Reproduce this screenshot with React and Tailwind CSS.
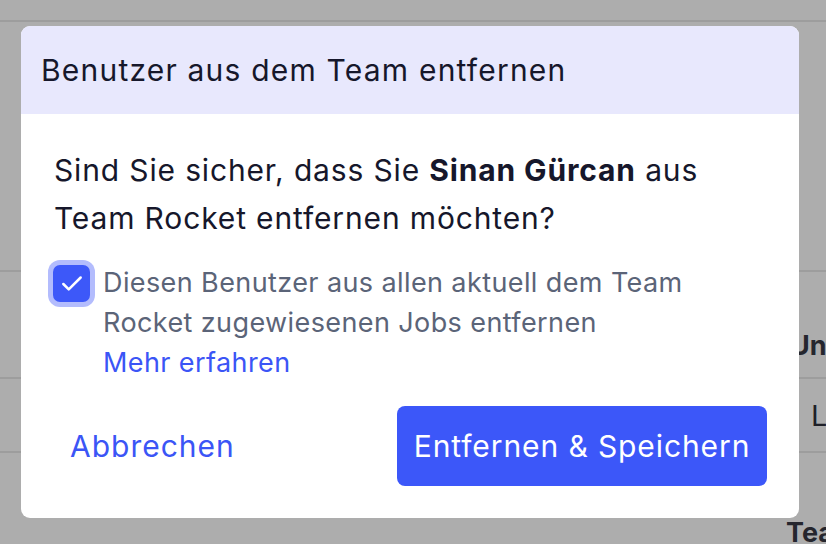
import { Check } from 'lucide-react';

// Background table that sits behind the dialog
function BackgroundTable() {
  return (
    <div className="flex flex-col h-full">
      <div className="h-[22px] border-b-2 border-[#9d9d9d]" />
      <div className="h-[250px] border-b-2 border-[#9d9d9d]" />
      <div className="h-[107px] border-b-2 border-[#9d9d9d] flex items-end pb-[18px] pl-[790px]">
        <span className="text-[27px] font-bold text-[#25262e] leading-none whitespace-nowrap">Unt</span>
      </div>
      <div className="h-[74px] border-b-2 border-[#9d9d9d] flex items-center pl-[811px]">
        <span className="text-[29px] text-[#1f2028] leading-none">L</span>
      </div>
      <div className="flex-1 flex items-end pl-[786px]">
        <span className="text-[27px] font-bold text-[#25262e] leading-none whitespace-nowrap -mb-[2px]">Tea</span>
      </div>
    </div>
  );
}

export default function App() {
  const removeJobs = true;

  return (
    <div className="relative w-[826px] h-[544px] overflow-hidden bg-[#adadad]" style={{ fontFamily: 'Inter, "Noto Sans", sans-serif' }}>
      <BackgroundTable />

      {/* Dialog */}
      <div className="absolute left-[21px] top-[26px] w-[778px] h-[492px] bg-white rounded-[9px] overflow-hidden flex flex-col">
        <div className="h-[88px] bg-[#e8e8fd] flex items-center px-[20px]">
          <h2 className="text-[30px] text-[#16172b] tracking-[1.2px]">Benutzer aus dem Team entfernen</h2>
        </div>

        <div className="flex-1 flex flex-col pt-[32px] px-[33px]">
          <p className="text-[30px] leading-[48px] text-[#16172b] tracking-[0.85px]">
            Sind Sie sicher, dass Sie <span className="font-bold">Sinan Gürcan</span> aus
            <br />
            Team Rocket entfernen möchten?
          </p>

          {/* Checkbox row */}
          <div className="flex items-start gap-[13px] mt-[22px] -ml-[1px]">
            <button className="shrink-0 w-[37px] h-[37px] mt-[1px] rounded-[7px] bg-[#3d58f9] ring-[5px] ring-[#b3bcfd] flex items-center justify-center">
              {removeJobs && <Check size={26} strokeWidth={2.3} className="text-white" />}
            </button>
            <div className="text-[27px] leading-[40px] text-[#5b6478] tracking-[0.4px] -mt-[1px]">
              Diesen Benutzer aus allen aktuell dem Team
              <br />
              Rocket zugewiesenen Jobs entfernen
              <br />
              <a className="text-[#3b55f6]">Mehr erfahren</a>
            </div>
          </div>

          {/* Footer buttons */}
          <div className="mt-auto mb-[32px] flex items-center justify-between">
            <button className="ml-[16px] text-[30px] text-[#3b55f6] tracking-[1px]">Abbrechen</button>
            <button className="w-[370px] h-[80px] rounded-[8px] bg-[#3c57f9] text-white text-[30px] tracking-[0.9px] -mr-[1px]">
              Entfernen &amp; Speichern
            </button>
          </div>
        </div>
      </div>
    </div>
  );
}
